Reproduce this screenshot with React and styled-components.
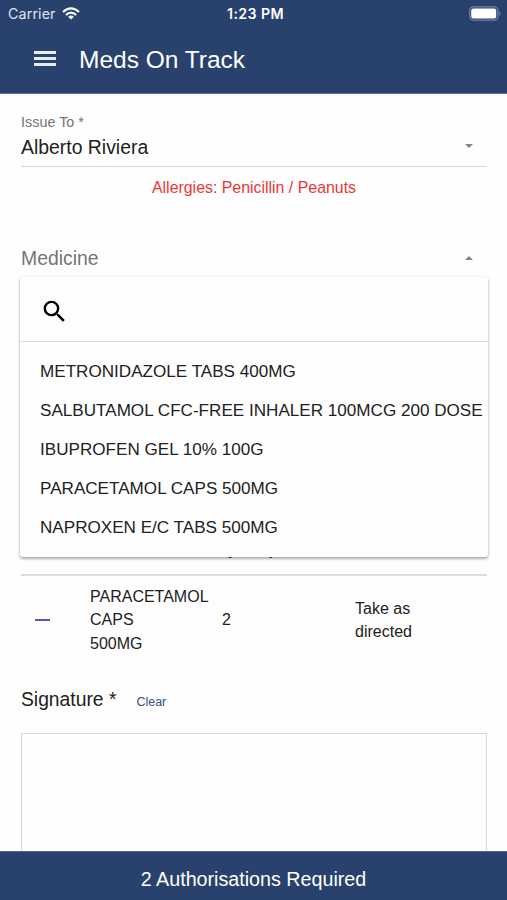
import React, { useState } from 'react';
import styled, { createGlobalStyle } from 'styled-components';

const GlobalStyle = createGlobalStyle`
  * {
    box-sizing: border-box;
  }

  body {
    margin: 0;
    background: #fefefe;
    color: #212121;
    font-family: "Liberation Sans", Arial, sans-serif;
  }

  button {
    font-family: inherit;
  }
`

const Screen = styled.div`
  display: flex;
  flex-direction: column;
  height: 900px;
  overflow: hidden;
`

const Header = styled.header`
  flex: none;
  height: 94px;
  background: #29426d;
  color: #fff;
  border-bottom: 1px solid #5f719a;
`

const StatusBar = styled.div`
  display: grid;
  grid-template-columns: 1fr auto 1fr;
  align-items: center;
  height: 27px;
  padding: 0 6px 0 8px;
  font-family: Inter, sans-serif;
`

const Carrier = styled.div`
  display: flex;
  align-items: center;
  gap: 6px;
  font-size: 14.3px;
  letter-spacing: 0.1px;
  color: #dfe4ee;
`

const Clock = styled.div`
  padding-left: 2px;
  font-size: 14.2px;
  font-weight: 600;
  letter-spacing: 0.4px;
`

const Battery = styled.svg`
  justify-self: end;
`

const Toolbar = styled.div`
  display: flex;
  align-items: center;
  gap: 23px;
  height: 66px;
  padding-left: 34px;
`

const MenuButton = styled.button`
  display: flex;
  flex-direction: column;
  gap: 3px;
  width: 22px;
  margin-bottom: 3px;
  padding: 0;
  border: 0;
  background: none;
`

const MenuLine = styled.span`
  width: 100%;
  height: 3px;
  background: #e6eaf2;
`

const Title = styled.h1`
  margin: 0;
  font-size: 24.5px;
  font-weight: 400;
`

const Content = styled.main`
  flex: 1;
  min-height: 0;
  overflow: hidden;
  padding: 0 20px 0 21px;
`

const Label = styled.div`
  height: 18px;
  font-size: 14.4px;
  line-height: 18px;
  color: #757575;
`

const Select = styled.div`
  display: flex;
  align-items: center;
  justify-content: space-between;
  height: ${props => props.height};
  padding-right: 14px;
  font-size: 19.4px;
  color: ${props => props.placeholder ? "#757575" : "#212121"};
`

const Caret = styled.span`
  margin-bottom: 2px;
  border: 4px solid transparent;
  ${props => props.up
    ? `
        border-bottom-color: #858585;
        border-top: 0;
      `
    : `
        border-top-color: #858585;
        border-bottom: 0;
      `
  }
`

const IssueField = styled.div`
  height: 73px;
  padding-top: 19px;
  border-bottom: 1px solid #d6d6d6;
`

const Allergies = styled.p`
  margin: 10px 0 0;
  font-size: 15.9px;
  line-height: 22px;
  text-align: center;
  color: #ea3834;
`

const MedicineField = styled.div`
  position: relative;
  height: 40px;
  margin-top: 43px;
  padding-top: 4px;
`

const Dropdown = styled.div`
  position: absolute;
  z-index: 1;
  top: 35px;
  left: -1px;
  right: -1px;
  height: 280px;
  background: #fefefe;
  border-radius: 3px;
  box-shadow: 0 2px 3px rgba(0, 0, 0, 0.3), 0 0 3px rgba(0, 0, 0, 0.1);
`

const SearchBox = styled.div`
  display: flex;
  align-items: center;
  height: 65px;
  padding: 5px 0 0 20px;
  border-bottom: 1px solid #d9d9d9;
`

const Options = styled.ul`
  margin: 0;
  padding: 10px 0 0 20px;
  list-style: none;
`

const Option = styled.li`
  height: 39.1px;
  font-size: 17.1px;
  line-height: 39px;
  white-space: nowrap;
  cursor: pointer;
`

const Row = styled.div`
  display: grid;
  grid-template-columns: 69px 132px 133px 1fr;
  align-items: center;
`

const TableHead = styled(Row)`
  align-items: end;
  height: 54px;
  margin-top: 240px;
  padding-bottom: 15px;
  border-bottom: 2px solid #dcdcdc;
  font-size: 14.6px;
  line-height: 17px;
`

const TableRow = styled(Row)`
  height: 88px;
  font-size: 16px;
  line-height: 23.4px;
`

const Cell = styled.div`
  width: ${props => props.width || 'auto'};
`

const RemoveButton = styled.button`
  width: 15px;
  height: 2px;
  margin-left: 14px;
  padding: 0;
  border: 0;
  background: #5357b8;
`

const SignatureHead = styled.div`
  display: flex;
  align-items: baseline;
  gap: 20px;
  margin-top: 24px;
  height: 45px;
  font-size: 19.3px;
  line-height: 24px;
`

const ClearLink = styled.a`
  font-size: 12.5px;
  color: #34507f;
`

const SignaturePad = styled.div`
  height: 200px;
  border: 1px solid #d8d8d8;
`

const Footer = styled.footer`
  display: flex;
  flex: none;
  align-items: center;
  justify-content: center;
  height: 49px;
  padding-top: 6px;
  background: #29426d;
  border-top: 1px solid #52658a;
  color: #fff;
  font-size: 19.7px;
`

const medicines = [
  'METRONIDAZOLE TABS 400MG',
  'SALBUTAMOL CFC-FREE INHALER 100MCG 200 DOSE',
  'IBUPROFEN GEL 10% 100G',
  'PARACETAMOL CAPS 500MG',
  'NAPROXEN E/C TABS 500MG',
]

const WifiIcon = () => (
  <svg width="18" height="13" viewBox="0 0 18 13" fill="none" stroke="#fff" strokeWidth="2.2">
    <path d="M1 5 Q9 -2.2 17 5" />
    <path d="M3.9 8 Q9 3.4 14.1 8" />
    <path d="M9 12.6 L6.1 9.8 Q9 7.4 11.9 9.8 Z" fill="#fff" stroke="none" />
  </svg>
)

const SearchIcon = () => (
  <svg width="29" height="29" viewBox="0 0 24 24" fill="#000">
    <path d="M15.5 14h-.79l-.28-.27A6.471 6.471 0 0 0 16 9.5 6.5 6.5 0 1 0 9.5 16c1.61 0 3.09-.59 4.23-1.57l.27.28v.79l5 4.99L20.49 19l-4.99-5zm-6 0C7.01 14 5 11.99 5 9.5S7.01 5 9.5 5 14 7.01 14 9.5 11.99 14 9.5 14z" />
  </svg>
)

const MedsOnTrack = () => {
  const [open, setOpen] = useState(true);
  const [medicine, setMedicine] = useState('');

  function selectMedicine(name) {
    setMedicine(name);
    setOpen(false);
  }

  return (
    <Screen>
      <GlobalStyle />
      <Header>
        <StatusBar>
          <Carrier>Carrier <WifiIcon /></Carrier>
          <Clock>1:23 PM</Clock>
          <Battery width="32" height="15" viewBox="0 0 32 15">
            <rect x="0.7" y="0.8" width="28.2" height="13.4" rx="3.6" fill="none" stroke="#7183a4" strokeWidth="1.2" />
            <rect x="2.2" y="2.5" width="25" height="10" rx="2" fill="#fff" />
            <path d="M30.2 5.2 Q32.8 7.5 30.2 9.8 Z" fill="#7183a4" />
          </Battery>
        </StatusBar>
        <Toolbar>
          <MenuButton aria-label="Menu">
            <MenuLine />
            <MenuLine />
            <MenuLine />
          </MenuButton>
          <Title>Meds On Track</Title>
        </Toolbar>
      </Header>
      <Content>
        <IssueField>
          <Label>Issue To *</Label>
          <Select height="32px">Alberto Riviera <Caret /></Select>
        </IssueField>
        <Allergies>Allergies: Penicillin / Peanuts</Allergies>
        <MedicineField>
          <Select height="25px" placeholder={medicine ? undefined : 'Medicine'} onClick={() => setOpen(!open)}>
            {medicine || 'Medicine'} <Caret up={open ? 1 : 0} />
          </Select>
          {open && (
            <Dropdown>
              <SearchBox><SearchIcon /></SearchBox>
              <Options>
                {medicines.map(name => (
                  <Option key={name} onClick={() => selectMedicine(name)}>{name}</Option>
                ))}
              </Options>
            </Dropdown>
          )}
        </MedicineField>
        <TableHead>
          <Cell />
          <Cell>Medicine</Cell>
          <Cell>Quantity</Cell>
          <Cell>Directions</Cell>
        </TableHead>
        <TableRow>
          <RemoveButton aria-label="Remove" />
          <Cell width="60px">PARACETAMOL CAPS 500MG</Cell>
          <Cell>2</Cell>
          <Cell width="70px">Take as directed</Cell>
        </TableRow>
        <SignatureHead>
          Signature * <ClearLink>Clear</ClearLink>
        </SignatureHead>
        <SignaturePad />
      </Content>
      <Footer>2 Authorisations Required</Footer>
    </Screen>
  )
}

export default MedsOnTrack;
